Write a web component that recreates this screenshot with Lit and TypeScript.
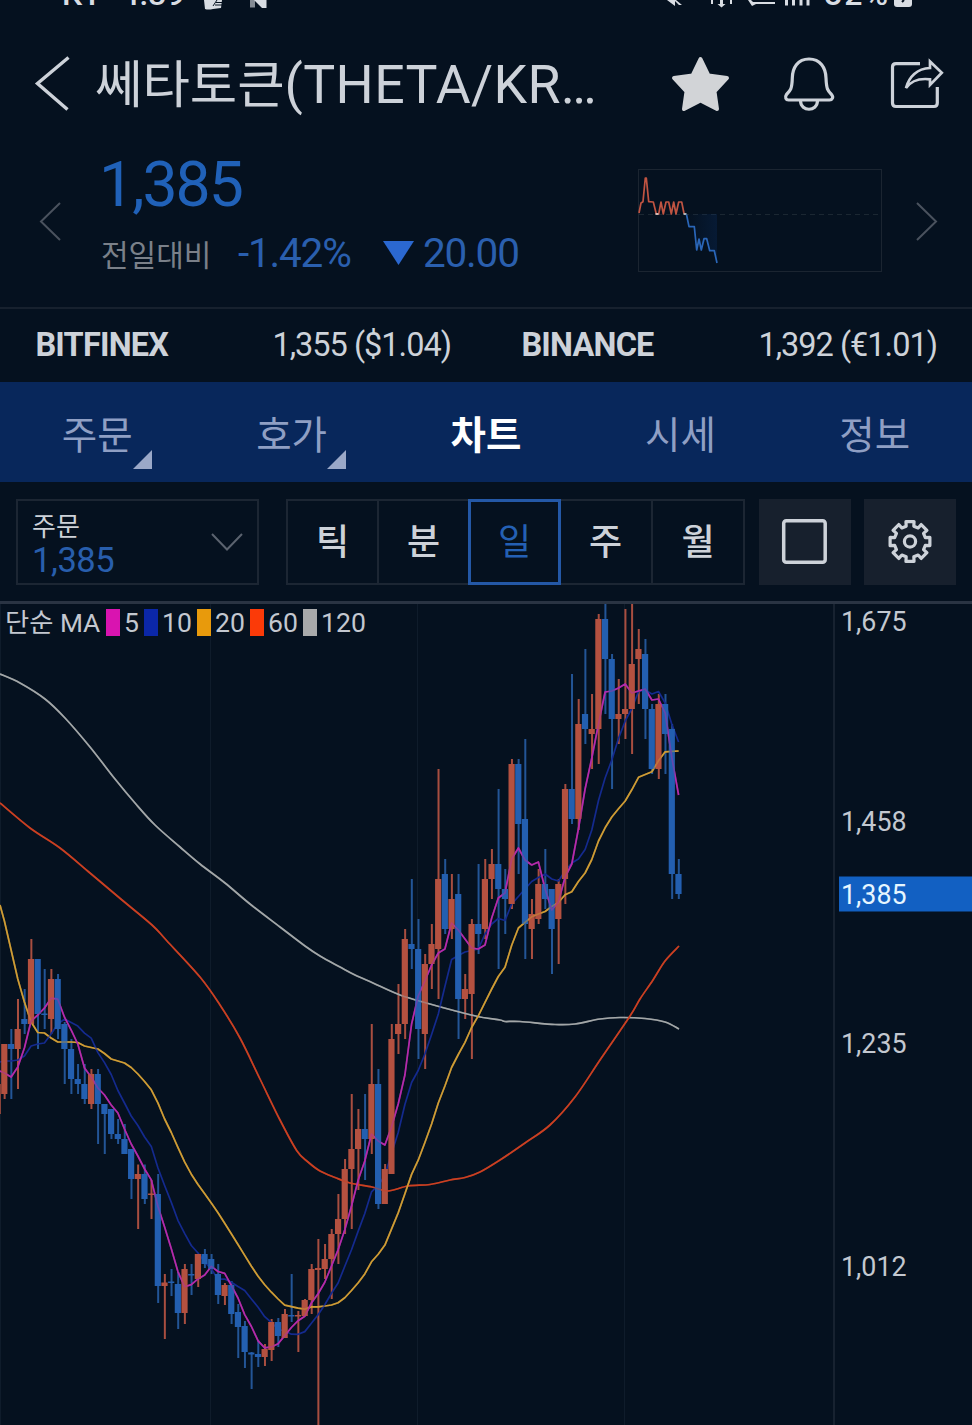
import { LitElement, html, svg, css } from "lit";
import { customElement, property } from "lit/decorators.js";

type Candle = [kind: "R" | "B", high: number, low: number, top: number, bottom: number];

const CANDLES: Candle[] = [
  ["R", 1044, 1099, 1044, 1094], ["B", 1029, 1099, 1044, 1049], ["R", 999, 1089, 1029, 1049],
  ["B", 989, 1034, 1019, 1024], ["R", 939, 1024, 959, 1024], ["B", 959, 1049, 959, 1014],
  ["B", 969, 1029, 1013.5, 1015], ["R", 969, 1034, 979, 1019], ["B", 974, 1039, 979, 1029],
  ["B", 1022, 1084, 1024, 1049], ["B", 1039, 1094, 1049, 1079], ["B", 1064, 1094, 1079, 1084],
  ["B", 1064, 1104, 1084, 1099], ["R", 1069, 1109, 1074, 1104], ["B", 1069, 1144, 1074, 1104],
  ["B", 1104, 1154, 1104, 1114], ["B", 1109, 1139, 1109, 1134], ["B", 1119, 1144, 1134, 1139],
  ["B", 1124, 1154, 1139, 1154], ["B", 1149, 1199, 1149, 1179], ["R", 1164.5, 1229, 1174, 1179],
  ["B", 1164.5, 1204, 1174, 1199], ["R", 1180, 1219, 1193.5, 1195], ["B", 1174, 1303, 1194, 1286],
  ["R", 1274, 1339, 1282.5, 1286], ["B", 1269, 1296, 1281.5, 1283], ["B", 1272, 1329, 1284, 1313],
  ["R", 1264, 1324, 1269, 1313], ["B", 1264, 1295, 1274, 1275.5], ["R", 1254, 1287, 1254, 1279],
  ["B", 1249, 1268, 1254, 1264], ["B", 1254, 1274, 1259, 1269], ["B", 1264, 1304, 1274, 1295],
  ["R", 1283, 1305, 1285, 1296], ["B", 1281, 1324, 1285, 1314], ["B", 1304, 1358, 1312, 1327],
  ["B", 1321, 1368, 1326, 1352], ["B", 1352, 1389, 1352.5, 1354.5], ["B", 1340, 1367, 1354, 1357],
  ["R", 1344, 1366, 1349, 1357], ["R", 1319, 1361, 1322, 1350], ["B", 1318, 1347, 1322, 1336],
  ["R", 1309, 1338, 1314, 1338], ["B", 1274, 1322, 1315, 1316.5], ["R", 1311, 1352, 1315, 1316.5],
  ["R", 1299, 1316, 1300, 1316], ["R", 1264, 1314, 1269, 1300], ["R", 1239, 1426, 1268, 1270],
  ["R", 1244, 1279, 1259, 1269], ["R", 1229, 1299, 1234, 1259], ["R", 1194, 1264, 1219, 1234],
  ["R", 1159, 1234, 1169, 1219], ["R", 1094, 1229, 1149, 1169], ["R", 1109, 1190, 1129, 1149],
  ["B", 1094, 1180, 1129, 1139], ["R", 1024, 1154, 1084, 1139], ["B", 1069, 1209, 1084, 1204],
  ["R", 1164, 1204, 1169, 1204], ["R", 1024, 1174, 1039, 1174], ["R", 984, 1054, 1024, 1034],
  ["R", 929, 1039, 939, 1024], ["B", 879, 969, 944, 949], ["B", 919, 1059, 949, 1029],
  ["R", 954, 1069, 964, 1034], ["R", 924, 989, 944, 964], ["R", 769, 999, 879, 949],
  ["B", 859, 934, 874, 929], ["R", 874, 939, 899, 929], ["B", 874, 1039, 894, 999],
  ["R", 974, 1019, 989, 999], ["R", 919, 1059, 924, 994], ["B", 864, 954, 924, 934],
  ["R", 859, 939, 879, 929], ["R", 849, 899, 864, 879], ["B", 789, 969, 864, 889],
  ["B", 869, 934, 889, 899], ["R", 759, 909, 764, 904], ["B", 759, 874, 764, 824],
  ["B", 739, 959, 819, 924], ["R", 899, 959, 914, 929], ["R", 869, 924, 884, 919],
  ["B", 849, 909, 884, 899], ["B", 889, 974, 889, 929], ["R", 879, 964, 884, 919],
  ["R", 784, 904, 789, 879], ["B", 674, 824, 789, 819], ["R", 699, 830, 724, 819],
  ["B", 649, 744, 714, 729], ["R", 694, 769, 729, 734], ["R", 614, 764, 619, 729],
  ["B", 604, 714, 619, 659], ["B", 654, 789, 659, 719], ["R", 679, 744, 714, 719],
  ["R", 609, 739, 709, 714], ["R", 604, 754, 664, 709], ["R", 629, 704, 649, 659],
  ["B", 639, 739, 654, 709], ["B", 704, 774, 709, 769], ["R", 694, 779, 704, 769],
  ["B", 694, 774, 704, 734], ["B", 724, 899, 729, 874], ["B", 859, 899, 874, 894],
];

const xAt = (i: number) => 4.4 + i * 6.675;
const closes = CANDLES.map(([k, , , t, b]) => (k === "R" ? t : b));

/* Moving average path; `seed` holds the values before a full window is available. */
function average(span: number, left: number, seed: number[]): string {
  const pts = [`0,${left}`];
  closes.forEach((_, i) => {
    let y: number;
    if (i < seed.length) y = seed[i];
    else y = closes.slice(i - span + 1, i + 1).reduce((a, b) => a + b, 0) / span;
    pts.push(`${xAt(i).toFixed(1)},${y.toFixed(1)}`);
  });
  return "M" + pts.join("L");
}

/* Catmull-Rom curve through the given points. */
function smooth(points: number[][]): string {
  let d = `M${points[0]}`;
  for (let i = 0; i < points.length - 1; i++) {
    const p0 = points[Math.max(i - 1, 0)];
    const p1 = points[i];
    const p2 = points[i + 1];
    const p3 = points[Math.min(i + 2, points.length - 1)];
    const c1 = [p1[0] + (p2[0] - p0[0]) / 6, p1[1] + (p2[1] - p0[1]) / 6];
    const c2 = [p2[0] - (p3[0] - p1[0]) / 6, p2[1] - (p3[1] - p1[1]) / 6];
    d += `C${c1} ${c2} ${p2}`;
  }
  return d;
}

const MA5 = average(5, 1071, [1073, 1077, 1067, 1048]);
const MA10 = average(10, 1062, [1061, 1061, 1060, 1056, 1046, 1044, 1043, 1034, 1024]);
const MA20 = average(20, 905, [921, 950, 979, 1002, 1022, 1032.5, 1033, 1038, 1042, 1042, 1042, 1042.5, 1046, 1047.5, 1049, 1053.5, 1059, 1061, 1063]);
const MA60 = smooth([[0, 803], [30, 828], [60, 848], [90, 873], [122, 900], [152, 925], [167, 941], [200, 977], [220, 1005], [240, 1038], [260, 1079], [280, 1120], [297, 1151], [308, 1162], [320, 1171], [335, 1177.5], [350, 1183], [372, 1187], [388, 1191], [408, 1186], [430, 1184.5], [450, 1180], [465, 1177.5], [480, 1172], [500, 1160], [525, 1143], [550, 1125], [575, 1097], [600, 1060], [630, 1016], [640, 999], [653, 980], [665, 961], [679, 946]]);
const MA120 = smooth([[0, 674], [20, 683], [45, 699], [65, 718], [90, 747], [115, 779], [135, 803], [155, 825], [180, 847], [200, 864], [225, 883], [250, 904], [280, 927], [305, 946], [320, 956], [340, 967], [355, 975], [373, 983], [400, 995], [430, 1004], [450, 1009.5], [480, 1017], [500, 1020], [505, 1021.5], [520, 1021.5], [555, 1024.5], [575, 1024], [600, 1019], [620, 1017.5], [645, 1018.5], [665, 1022], [679, 1029]]);

function gearPoints(cx: number, cy: number, outer: number, inner: number): string {
  const pts: string[] = [];
  for (let t = 0; t < 8; t++) {
    const base = (t * 45 - 90) * (Math.PI / 180);
    for (const [r, deg] of [[inner, -14], [outer, -11.5], [outer, 11.5], [inner, 14]]) {
      const a = base + (deg * Math.PI) / 180;
      pts.push(`${(cx + r * Math.cos(a)).toFixed(2)},${(cy + r * Math.sin(a)).toFixed(2)}`);
    }
  }
  return pts.join(" ");
}

@customElement("status-strip")
export class StatusStrip extends LitElement {
  static styles = css`
    :host { display: block; height: 14px; overflow: hidden; }
    svg { display: block; }
    text { font-family: Roboto, "Noto Sans CJK KR", sans-serif; font-size: 32px; font-weight: 500; fill: #d9dde3; }
  `;
  render() {
    return html`<svg width="972" height="14" viewBox="0 0 972 14">
      <text x="62" y="5">KT</text>
      <text x="121" y="5" textLength="64">4:39</text>
      <g fill="#d9dde3">
        <path d="M204 0h18l-1 8-8 1q-5 1-8 0z" />
        <path d="M213 6l4-6M215 5h7M216 2.500h6" stroke="#05111f" stroke-width="1" />
        <path d="M250 0h5v7.500h-5z" opacity=".6" />
        <path d="M254 0h12.500v8h-4.500z" />
        <path d="M667 0h8v6zM676 0l6 5h-3l-5-5z" />
        <path d="M720 0h3v4h2.500l-4 3.500-4-3.500h2.500zM711 0h2v4h-2zM730 0h2v4h-2z" />
        <path d="M748 0h3l2 2h22v2h-19l-4 2z" />
        <path d="M785 0h3v5.500h-3zM792 0h3v5.500h-3zM799.500 0h3v5.500h-3zM806.500 0h3v5.500h-3z" />
        <path d="M894 0h18v4q0 3-3 3h-12q-3 0-3-3z" />
        <path d="M902 2l2-2" stroke="#05111f" stroke-width="2" />
      </g>
      <text x="824" y="5" textLength="64">82%</text>
    </svg>`;
  }
}

@customElement("price-chart")
export class PriceChart extends LitElement {
  static styles = css`
    :host { display: block; position: relative; height: 821px; border-top: 3px solid #2a3443; }
    .plot { display: block; }
    .axis { font-family: Roboto, sans-serif; font-size: 26.8px; fill: #c3c8d0; }
    .axis.now { fill: #e6f6ff; }
    .legend {
      position: absolute; top: 5px; left: 5px; display: flex; align-items: center; height: 27px;
      font: 26.6px/27px Roboto, "Noto Sans CJK KR", sans-serif; color: #c3c8d0; white-space: pre;
    }
    .name { width: 101px; padding-top: 1px; font-size: 26.3px; }
    .chip { width: 14px; height: 27px; margin-right: 4px; }
    .m5 { background: #d914b0; } .m10 { background: #0b27a8; } .m20 { background: #e89a0c; }
    .m60 { background: #fb3a08; } .m120 { background: #a9aaab; }
    .l5 { width: 20px; } .l10 { width: 35px; }
  `;
  render() {
    const red = "#b45140";
    const blue = "#235fb0";
    return html`
      <svg class="plot" width="972" height="821" viewBox="0 604 972 821">
        ${[0.5, 210.5, 417.5, 624.5].map((x) => svg`<path d="M${x} 604V1425" stroke="#0f1c2b" />`)}
        <path d="M834 604V1425" stroke="#1e2937" stroke-width="1.5" />
        <path d="M0 1084V1114" stroke="${red}" stroke-width="1.500" />
        ${CANDLES.map(
          ([k, h, l], i) => svg`<rect x=${xAt(i) - 0.75} y=${h} width="2" height=${l - h} fill=${k === "R" ? "#a84e40" : "#235596"} />`
        )}
        <g fill="none" stroke-width="1.700" stroke-linejoin="round">
          <path d=${MA120} stroke="#a3a7a8" />
          <path d=${MA60} stroke="#cb4022" />
          <path d=${MA20} stroke="#cf9c35" />
          <path d=${MA10} stroke="#142a8e" />
          <path d=${MA5} stroke="#b42bab" />
        </g>
        ${CANDLES.map(
          ([k, , , t, b], i) => svg`<rect x=${xAt(i) - 3.2} y=${t} width="6.2" height=${b - t} fill=${k === "R" ? red : blue} />`
        )}
        <g fill="none" stroke-width="1.700" stroke-linejoin="round" opacity=".45">
          <path d=${MA120} stroke="#a3a7a8" />
          <path d=${MA60} stroke="#cb4022" />
          <path d=${MA20} stroke="#cf9c35" />
          <path d=${MA5} stroke="#b42bab" />
        </g>
        <rect x="839" y="876.500" width="133" height="35" fill="#1260c2" />
        <text class="axis" x="841" y="631">1,675</text>
        <text class="axis" x="841" y="831">1,458</text>
        <text class="axis now" x="841" y="904">1,385</text>
        <text class="axis" x="841" y="1053">1,235</text>
        <text class="axis" x="841" y="1276">1,012</text>
      </svg>
      <div class="legend">
        <span class="name">단순 MA</span>
        <i class="chip m5"></i><span class="l5">5</span>
        <i class="chip m10"></i><span class="l10">10</span>
        <i class="chip m20"></i><span class="l10">20</span>
        <i class="chip m60"></i><span class="l10">60</span>
        <i class="chip m120"></i><span>120</span>
      </div>
    `;
  }
}

@customElement("app-root")
export class AppRoot extends LitElement {
  @property({ type: String }) period = "일";

  static styles = css`
    :host {
      display: block; width: 972px; height: 1425px; overflow: hidden; background: #05111f; color: #cdd2d9;
      font-family: Roboto, "Noto Sans CJK KR", sans-serif; font-weight: 400; white-space: nowrap;
    }
    * { box-sizing: border-box; }
    svg { display: block; flex: none; }
    .header { display: flex; align-items: center; height: 140px; padding: 0 26px 0 34px; }
    .title { flex: none; margin: 0 0 0 25px; padding-top: 2px; width: 576px; font-size: 51.5px; font-weight: 400; line-height: 64px; }
    .latin { font-size: 53.6px; letter-spacing: .35px; }
    .tools { display: flex; gap: 51px; }
    .summary { display: flex; height: 153px; padding-left: 38px; }
    .side { margin-top: 47px; }
    .quote { flex: none; width: 536px; margin-left: 39px; }
    .price { height: 64px; margin: -1px 0 0 -2px; line-height: 64px; font-size: 62.5px; letter-spacing: -2px; color: #2061b8; }
    .change { display: flex; align-items: center; height: 50px; margin-top: 11px; font-size: 40.5px; letter-spacing: -1.2px; color: #2a5fae; }
    .caption { width: 137px; font-size: 30px; letter-spacing: 0; color: #7a8089; }
    .rate { width: 145px; }
    .amount { margin-left: 8px; }
    .mini { margin-top: 14px; }
    .next { margin-left: 32px; }
    .exchanges { display: flex; height: 75px; border-top: 2.5px solid #17212e; font-size: 32.5px; line-height: 73px; padding-left: 36px; letter-spacing: -1px; }
    .pair { display: flex; flex: none; justify-content: space-between; width: 415px; margin-right: 71px; }
    .pair b { font-weight: 700; letter-spacing: -.8px; margin-left: -.6px; }
    .tabs { display: grid; grid-template-columns: repeat(5, 1fr); height: 100px; background: #08275b; color: #8f9fc4; font-size: 38.5px; }
    .tab { position: relative; padding-top: 4px; line-height: 100px; height: 100px; text-align: center; }
    .tab.on { color: #fff; font-weight: 700; }
    .more::after { content: ""; position: absolute; left: 133px; top: 68px; border-style: solid; border-width: 0 0 19px 19px; border-color: transparent transparent #9aa8c8; }
    .toolbar { display: flex; height: 119px; padding: 17px 0 0 16px; }
    .toolbar > * { flex: none; }
    .select { display: flex; justify-content: space-between; align-items: center; width: 243px; height: 86px; padding: 0 14px; border: 2px solid #1c2633; }
    .order { padding-top: 4px; font-size: 26px; line-height: 32px; }
    .order span { display: block; }
    .order .val { font-size: 34.5px; line-height: 34px; color: #285eac; letter-spacing: -.4px; }
    .periods { display: grid; grid-template: 82px / 89px 91px 92px 91px 92px; width: 459px; height: 86px; margin: 0 14px 0 27px; border: 2px solid #1c2633; }
    .period { padding-top: 3px; border-left: 2px solid #1c2633; text-align: center; font-size: 36px; line-height: 79px; font-weight: 500; }
    .period:first-child { border-left: 0; }
    .period.on { margin: -2px -1px -2px 0; border: 3px solid #2458a6; color: #2460b4; line-height: 77px; font-weight: 400; }
    .period.on + .period { border-left: 0; }
    .button { display: grid; place-items: center; width: 92px; height: 86px; margin-right: 13px; background: #17202d; }
  `;

  render() {
    return html`
      <status-strip></status-strip>
      <div class="header">
        <svg width="36" height="56" viewBox="34 55 36 56"><path d="M68.500 56.500L37.500 82.500L67.500 108.500" fill="none" stroke="#cdd2d9" stroke-width="3.400" /></svg>
        <h1 class="title">쎄타토큰<span class="latin">(THETA/KR…</span></h1>
        <div class="tools">
          <svg width="60" height="56" viewBox="671 55 60 56"><path d="M700.500 58L708.500 74.500L727 77L714.500 90.500L717 108L700.500 99.500L684 108L686.500 90.500L674 77L692.500 74.500Z" fill="#d2d4d7" stroke="#d2d4d7" stroke-width="4" stroke-linejoin="round" /></svg>
          <svg width="56" height="56" viewBox="782 55 56 56"><g fill="none" stroke="#cdd2d9" stroke-width="3.200"><path d="M809 58C797.500 58 792.500 67 792.300 77C792 88 790.500 89.500 786.500 93.500C784.500 96.500 786 99 788.500 99H829.500C832 99 834 96.500 831.500 93.500C827.500 89.500 826.500 88 826 77C825.700 67 820.500 58 809 58Z" /><path d="M800.500 100C801 111 817 111 817.500 100" /></g></svg>
          <svg width="56" height="56" viewBox="889 55 56 56"><g fill="none" stroke="#cdd2d9" stroke-width="3.200"><path d="M920 62.700H896Q892.500 62.700 892.500 66V102Q892.500 105.500 896 105.500H934Q937.300 105.500 937.300 102V86" /><path d="M930 60.500V67C917 67.500 909 76 906 87C911 80 919 77 930 78.300V84L941.800 71.800Z" stroke-width="2.700" /></g></svg>
        </div>
      </div>

      <div class="summary">
        <svg class="side" width="24" height="42" viewBox="38 201 24 42"><path d="M60 203L41 221.500L60 240" fill="none" stroke="#4a525e" stroke-width="2" /></svg>
        <div class="quote">
          <div class="price">1,385</div>
          <div class="change">
            <span class="caption">전일대비</span><span class="rate">-1.42%</span>
            <svg width="32" height="26" viewBox="0 0 32 26"><path d="M0 1H31L15.500 25Z" fill="#2b68d0" /></svg>
            <span class="amount">20.00</span>
          </div>
        </div>
        <svg class="mini" width="246" height="106" viewBox="637 168 246 106">
          <defs><linearGradient id="fade" x1="0" x2="1"><stop offset="0" stop-color="#0a2f66" stop-opacity="0" /><stop offset="1" stop-color="#0a2f66" stop-opacity=".3" /></linearGradient></defs>
          <rect x="638.500" y="169.500" width="243" height="102" fill="none" stroke="#1b2531" />
          <path d="M639 214.500H881" stroke="#1b2732" stroke-dasharray="5 4" />
          <path d="M686 214H717V262L714 251H710L706 239L701 250L697 250L694 227L689 226Z" fill="url(#fade)" />
          <g fill="none" stroke-width="1.700" stroke-linejoin="round">
            <path d="M639 213L641 203L643 201.700L645.300 178H646.300L648.700 201.700L653.300 202L656.300 214H658.700L661 202L663.300 214L666 202H668.700L671.300 214L673.700 202L676 214L678.700 202H681.700L684 213.500" stroke="#c05442" />
            <path d="M655.500 214H658.500M683.500 214H686.500" stroke="#e2e2e2" />
            <path d="M686.500 214.500L689 226.700H694.300L696.700 250L699 239L701.300 250L704 238.700H706.700L709.700 250.700H714.300L717 263" stroke="#2a66b8" />
          </g>
        </svg>
        <svg class="side next" width="24" height="42" viewBox="915 201 24 42"><path d="M917 203L936 221.500L917 240" fill="none" stroke="#4a525e" stroke-width="2" /></svg>
      </div>

      <div class="exchanges">
        <div class="pair"><b>BITFINEX</b><span>1,355 ($1.04)</span></div>
        <div class="pair"><b>BINANCE</b><span>1,392 (€1.01)</span></div>
      </div>

      <div class="tabs">
        <div class="tab more">주문</div>
        <div class="tab more">호가</div>
        <div class="tab on">차트</div>
        <div class="tab">시세</div>
        <div class="tab">정보</div>
      </div>

      <div class="toolbar">
        <div class="select">
          <div class="order"><span>주문</span><span class="val">1,385</span></div>
          <svg width="32" height="20" viewBox="0 0 32 20"><path d="M1 2L16 17.500L31 2" fill="none" stroke="#5b636f" stroke-width="2" /></svg>
        </div>
        <div class="periods">
          ${["틱", "분", "일", "주", "월"].map(
            (p) => html`<div class="period ${p === this.period ? "on" : ""}">${p}</div>`
          )}
        </div>
        <div class="button">
          <svg width="48" height="48" viewBox="0 0 48 48"><rect x="2.700" y="2.700" width="41.500" height="41.500" rx="2.500" fill="none" stroke="#cdd2d9" stroke-width="3.500" /></svg>
        </div>
        <div class="button">
          <svg width="48" height="48" viewBox="0 0 48 48"><g fill="none" stroke="#cdd2d9" stroke-width="3.200" stroke-linejoin="round"><polygon points=${gearPoints(24, 23.5, 20.3, 15.8)} /><circle cx="24" cy="23.500" r="5.600" /></g></svg>
        </div>
      </div>

      <price-chart></price-chart>
    `;
  }
}
